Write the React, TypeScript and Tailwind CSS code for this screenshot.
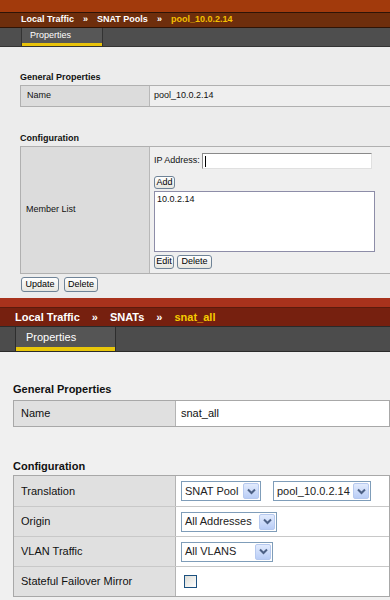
import React from 'react';

const font = { fontFamily: '"Liberation Sans", Arial, sans-serif' };

function XpButton({ label, className = '' }: { label: string; className?: string }) {
  return (
    <div
      className={`flex items-center justify-center rounded-[3px] border border-[#6f8397] bg-gradient-to-b from-[#ffffff] to-[#e6e6e0] text-[#000] ${className}`}
    >
      {label}
    </div>
  );
}

function XpSelect({ label, width }: { label: string; width: string }) {
  return (
    <div className={`flex h-[20px] items-center justify-between border border-[#7f9db9] bg-white pl-[3px] pr-[1px] ${width}`}>
      <span className="text-[11px] text-[#222]">{label}</span>
      <div className="flex h-[16px] w-[16px] items-center justify-center rounded-[2px] border border-[#b6c9ef] bg-gradient-to-b from-[#e2ebfd] to-[#b9cdf6]">
        <svg width="9" height="7" viewBox="0 0 9 7">
          <path d="M1 1.5 L4.5 5 L8 1.5" fill="none" stroke="#4d6185" strokeWidth="2" />
        </svg>
      </div>
    </div>
  );
}

function TopPanel() {
  return (
    <div className="flex h-[298px] flex-col bg-[#ececec]" style={font}>
      <div className="h-[12px] bg-[#a23a0c]" />
      <div className="h-[1px] bg-[#2e1406]" />
      <div className="flex h-[14px] items-center gap-[9px] bg-[#6e2e0c] pl-[21px] text-[9px] font-bold text-white">
        <span>Local Traffic</span>
        <span>»</span>
        <span>SNAT Pools</span>
        <span>»</span>
        <span className="text-[#f4c000]">pool_10.0.2.14</span>
      </div>
      <div className="h-[1px] bg-[#2e1406]" />
      <div className="flex h-[19px] border-b border-[#333] bg-[#4e4e4e]">
        <div className="ml-[21px] flex w-[82px] flex-col border-x border-[#333] bg-[#575757]">
          <div className="flex flex-1 items-center pl-[8px] text-[9px] text-white">Properties</div>
          <div className="h-[3px] bg-[#e8c20a]" />
        </div>
      </div>

      <div className="pl-[20px] pt-[24px]">
        <div className="text-[9px] font-bold leading-[12px] text-[#111]">General Properties</div>
        <div className="mt-[2px] flex h-[22px] border border-r-0 border-[#b0b0b0] text-[9px] text-[#111]">
          <div className="flex w-[129px] shrink-0 items-center border-r border-[#b8b8b8] bg-[#dcdcdc] pl-[6px]">Name</div>
          <div className="flex flex-1 items-center bg-[#efefef] pl-[4px]">pool_10.0.2.14</div>
        </div>

        <div className="mt-[25px] text-[9px] font-bold leading-[12px] text-[#111]">Configuration</div>
        <div className="mt-[2px] flex h-[128px] border border-r-0 border-[#b0b0b0] text-[9px] text-[#111]">
          <div className="flex w-[129px] shrink-0 items-center border-r border-[#b8b8b8] bg-[#dcdcdc] pl-[5px]">Member List</div>
          <div className="flex flex-1 flex-col bg-[#efefef] pl-[4px] pt-[6px]">
            <div className="flex items-center">
              <span className="w-[48px]">IP Address:</span>
              <div className="flex h-[16px] w-[170px] items-center border border-[#8a8a8a] border-b-[#e0e0e0] border-r-[#e0e0e0] bg-white pl-[2px]">
                <div className="h-[11px] w-[1px] bg-black" />
              </div>
            </div>
            <XpButton label="Add" className="mt-[7px] h-[13px] w-[21px] text-[9px]" />
            <div className="mt-[2px] h-[61px] w-[221px] border border-[#8d8da8] bg-white pl-[2px] pt-[1px]">10.0.2.14</div>
            <div className="mt-[3px] flex gap-[3px]">
              <XpButton label="Edit" className="h-[14px] w-[20px] text-[9px]" />
              <XpButton label="Delete" className="h-[14px] w-[35px] text-[9px]" />
            </div>
          </div>
        </div>
        <div className="mt-[3px] flex gap-[5px] pl-[1px]">
          <XpButton label="Update" className="h-[15px] w-[38px] text-[9px]" />
          <XpButton label="Delete" className="h-[15px] w-[34px] text-[9px]" />
        </div>
      </div>
    </div>
  );
}

function BottomPanel() {
  const rows = [
    { label: 'Translation', value: (
      <div className="flex items-center gap-[12px]">
        <XpSelect label="SNAT Pool" width="w-[80px]" />
        <XpSelect label="pool_10.0.2.14" width="w-[98px]" />
      </div>
    ) },
    { label: 'Origin', value: <XpSelect label="All Addresses" width="w-[96px]" /> },
    { label: 'VLAN Traffic', value: <XpSelect label="All VLANS" width="w-[92px]" /> },
    { label: 'Stateful Failover Mirror', value: (
      <div className="ml-[3px] h-[13px] w-[13px] border border-[#1c5180] bg-gradient-to-br from-[#dcdcd6] to-[#ffffff]" />
    ) },
  ];

  return (
    <div className="flex h-[302px] flex-col bg-[#f0f0f0]" style={font}>
      <div className="h-[9px] bg-[#a8321c]" />
      <div className="flex h-[19px] items-center gap-[12px] border-t border-[#5a1a0c] bg-[#76200f] pl-[15px] text-[11px] font-bold text-white">
        <span>Local Traffic</span>
        <span>»</span>
        <span>SNATs</span>
        <span>»</span>
        <span className="text-[#f6cc00]">snat_all</span>
      </div>
      <div className="flex h-[26px] border-y border-[#2a2a2a] bg-[#4c4c4c]">
        <div className="ml-[15px] flex w-[101px] flex-col border-x border-[#2e2e2e] bg-[#555]">
          <div className="flex flex-1 items-center pl-[10px] text-[11px] text-white">Properties</div>
          <div className="h-[4px] bg-[#e8c60a]" />
        </div>
      </div>

      <div className="pl-[13px] pt-[30px]">
        <div className="text-[11px] font-bold leading-[14px] text-[#111]">General Properties</div>
        <div className="mt-[4px] flex h-[27px] border border-[#a8a8a8] text-[11px] text-[#111]">
          <div className="flex w-[162px] shrink-0 items-center border-r border-[#b4b4b4] bg-[#e0e0e0] pl-[7px]">Name</div>
          <div className="flex flex-1 items-center bg-white pl-[5px]">snat_all</div>
        </div>

        <div className="mt-[32px] text-[11px] font-bold leading-[14px] text-[#111]">Configuration</div>
        <div className="mt-[2px] flex flex-col border border-[#a8a8a8] text-[11px] text-[#111]">
          {rows.map((row, index) => (
            <div key={index} className={`flex h-[30px] ${index > 0 ? 'border-t border-[#c8c8c8]' : ''}`}>
              <div className="flex w-[162px] shrink-0 items-center border-r border-[#b4b4b4] bg-[#e0e0e0] pl-[7px]">{row.label}</div>
              <div className="flex flex-1 items-center bg-white pl-[5px]">{row.value}</div>
            </div>
          ))}
        </div>
      </div>
    </div>
  );
}

export default function App() {
  return (
    <div className="h-[600px] w-[390px] overflow-hidden">
      <TopPanel />
      <BottomPanel />
    </div>
  );
}
